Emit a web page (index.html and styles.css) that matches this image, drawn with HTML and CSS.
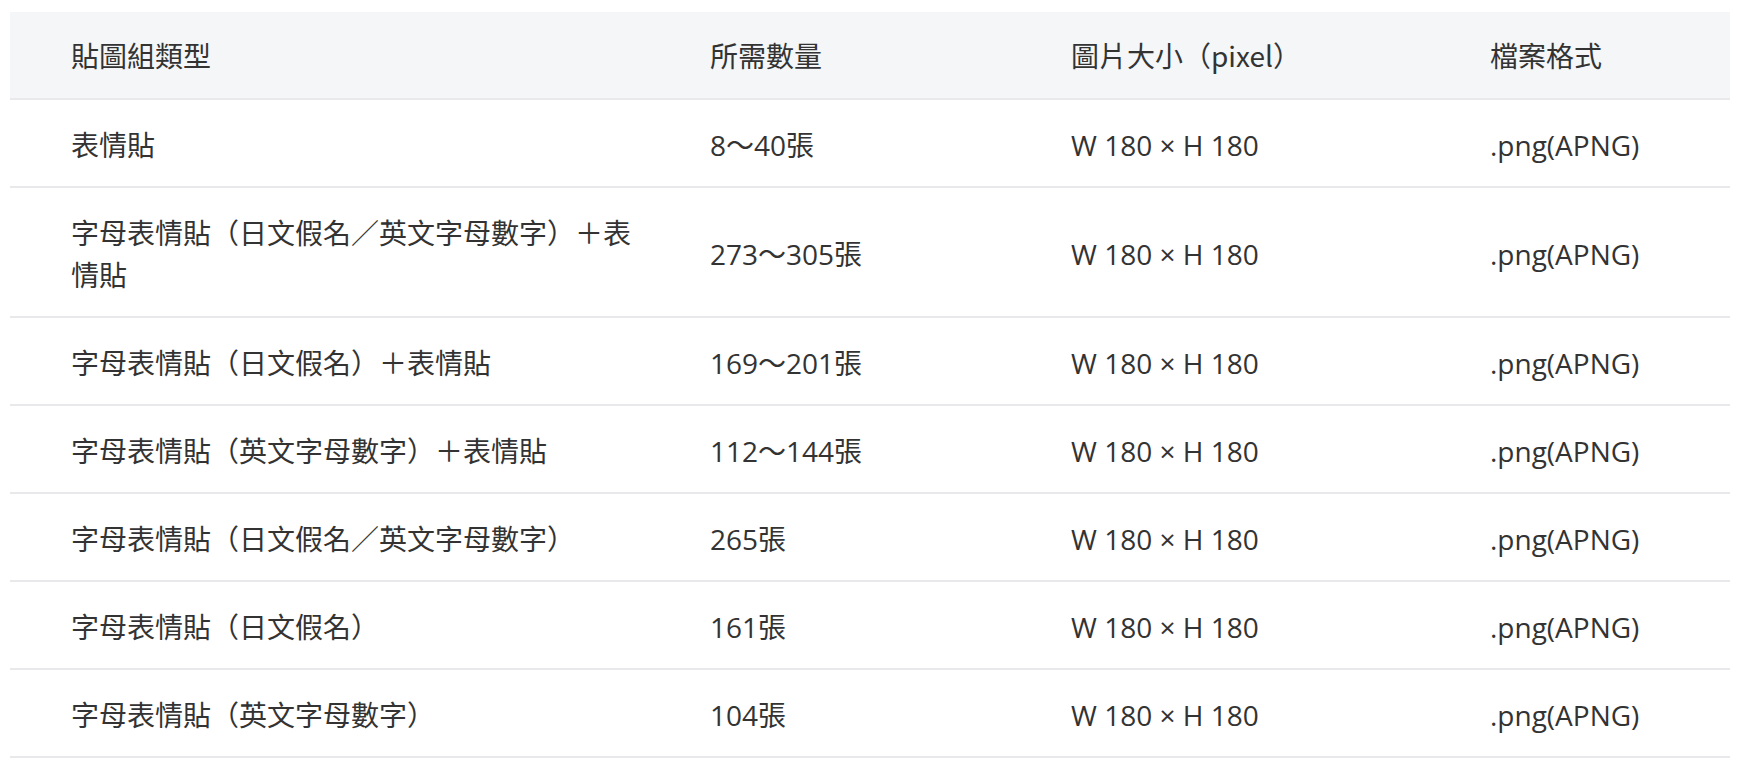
FILE: index.html
```html
<!DOCTYPE html>
<html lang="zh-Hant">
<head>
<meta charset="utf-8">
<title>貼圖組類型</title>
<link rel="stylesheet" href="styles.css">
</head>
<body>
<div class="wrap">
  <table class="spec">
    <colgroup>
      <col class="c1"><col class="c2"><col class="c3"><col class="c4">
    </colgroup>
    <thead>
      <tr><th>貼圖組類型</th><th>所需數量</th><th>圖片大小（pixel）</th><th>檔案格式</th></tr>
    </thead>
    <tbody>
      <tr><td>表情貼</td><td>8～40張</td><td>W 180 × H 180</td><td>.png(APNG)</td></tr>
      <tr><td>字母表情貼（日文假名／英文字母數字）＋表情貼</td><td>273～305張</td><td>W 180 × H 180</td><td>.png(APNG)</td></tr>
      <tr><td>字母表情貼（日文假名）＋表情貼</td><td>169～201張</td><td>W 180 × H 180</td><td>.png(APNG)</td></tr>
      <tr><td>字母表情貼（英文字母數字）＋表情貼</td><td>112～144張</td><td>W 180 × H 180</td><td>.png(APNG)</td></tr>
      <tr><td>字母表情貼（日文假名／英文字母數字）</td><td>265張</td><td>W 180 × H 180</td><td>.png(APNG)</td></tr>
      <tr><td>字母表情貼（日文假名）</td><td>161張</td><td>W 180 × H 180</td><td>.png(APNG)</td></tr>
      <tr><td>字母表情貼（英文字母數字）</td><td>104張</td><td>W 180 × H 180</td><td>.png(APNG)</td></tr>
    </tbody>
  </table>
</div>
</body>
</html>
```
FILE: styles.css
```css
html, body {
  margin: 0;
  padding: 0;
  background: #ffffff;
}

.wrap {
  padding: 12px 14px 0 10px;
}

.spec {
  width: 1720px;
  border-collapse: collapse;
  table-layout: fixed;
  font-family: "Open Sans", "Noto Sans CJK TC", sans-serif;
  font-size: 28px;
  line-height: 42px;
  color: #333333;
}

.c1 { width: 639px; }
.c2 { width: 361px; }
.c3 { width: 419px; }
.c4 { width: 301px; }

.spec th,
.spec td {
  padding: 22px 12px 22px 61px;
  text-align: left;
  vertical-align: middle;
  font-weight: normal;
  border-bottom: 2px solid #e9e9eb;
}

.spec td {
  padding-top: 24px;
  padding-bottom: 20px;
}

.spec thead th {
  background: #f5f6f8;
  font-family: "Noto Sans CJK TC", sans-serif;
}
```
